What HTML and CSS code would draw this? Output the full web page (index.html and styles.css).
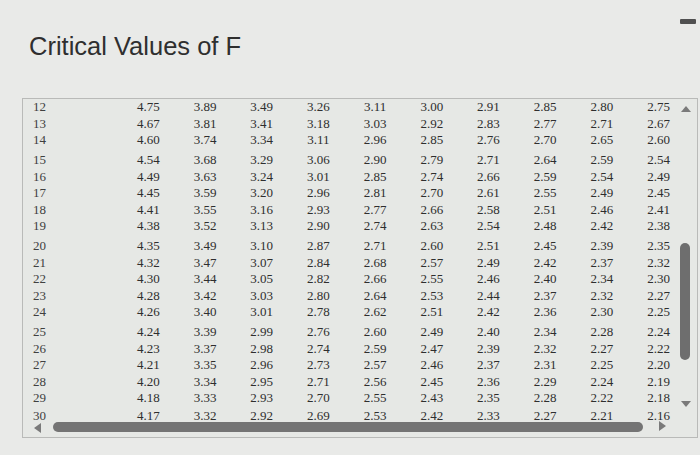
FILE: index.html
```html
<!DOCTYPE html>
<html>
<head>
<meta charset="utf-8">
<link rel="stylesheet" href="styles.css">
</head>
<body>
<div class="page">
  <header class="top">
    <h1 class="title">Critical Values of F</h1>
    <span class="minimize"></span>
  </header>
  <div class="box">
    <div class="table">
      <div class="group">
        <div class="row"><span class="lab">12</span><span>4.75</span><span>3.89</span><span>3.49</span><span>3.26</span><span>3.11</span><span>3.00</span><span>2.91</span><span>2.85</span><span>2.80</span><span>2.75</span></div>
        <div class="row"><span class="lab">13</span><span>4.67</span><span>3.81</span><span>3.41</span><span>3.18</span><span>3.03</span><span>2.92</span><span>2.83</span><span>2.77</span><span>2.71</span><span>2.67</span></div>
        <div class="row"><span class="lab">14</span><span>4.60</span><span>3.74</span><span>3.34</span><span>3.11</span><span>2.96</span><span>2.85</span><span>2.76</span><span>2.70</span><span>2.65</span><span>2.60</span></div>
      </div>
      <div class="group">
        <div class="row"><span class="lab">15</span><span>4.54</span><span>3.68</span><span>3.29</span><span>3.06</span><span>2.90</span><span>2.79</span><span>2.71</span><span>2.64</span><span>2.59</span><span>2.54</span></div>
        <div class="row"><span class="lab">16</span><span>4.49</span><span>3.63</span><span>3.24</span><span>3.01</span><span>2.85</span><span>2.74</span><span>2.66</span><span>2.59</span><span>2.54</span><span>2.49</span></div>
        <div class="row"><span class="lab">17</span><span>4.45</span><span>3.59</span><span>3.20</span><span>2.96</span><span>2.81</span><span>2.70</span><span>2.61</span><span>2.55</span><span>2.49</span><span>2.45</span></div>
        <div class="row"><span class="lab">18</span><span>4.41</span><span>3.55</span><span>3.16</span><span>2.93</span><span>2.77</span><span>2.66</span><span>2.58</span><span>2.51</span><span>2.46</span><span>2.41</span></div>
        <div class="row"><span class="lab">19</span><span>4.38</span><span>3.52</span><span>3.13</span><span>2.90</span><span>2.74</span><span>2.63</span><span>2.54</span><span>2.48</span><span>2.42</span><span>2.38</span></div>
      </div>
      <div class="group">
        <div class="row"><span class="lab">20</span><span>4.35</span><span>3.49</span><span>3.10</span><span>2.87</span><span>2.71</span><span>2.60</span><span>2.51</span><span>2.45</span><span>2.39</span><span>2.35</span></div>
        <div class="row"><span class="lab">21</span><span>4.32</span><span>3.47</span><span>3.07</span><span>2.84</span><span>2.68</span><span>2.57</span><span>2.49</span><span>2.42</span><span>2.37</span><span>2.32</span></div>
        <div class="row"><span class="lab">22</span><span>4.30</span><span>3.44</span><span>3.05</span><span>2.82</span><span>2.66</span><span>2.55</span><span>2.46</span><span>2.40</span><span>2.34</span><span>2.30</span></div>
        <div class="row"><span class="lab">23</span><span>4.28</span><span>3.42</span><span>3.03</span><span>2.80</span><span>2.64</span><span>2.53</span><span>2.44</span><span>2.37</span><span>2.32</span><span>2.27</span></div>
        <div class="row"><span class="lab">24</span><span>4.26</span><span>3.40</span><span>3.01</span><span>2.78</span><span>2.62</span><span>2.51</span><span>2.42</span><span>2.36</span><span>2.30</span><span>2.25</span></div>
      </div>
      <div class="group">
        <div class="row"><span class="lab">25</span><span>4.24</span><span>3.39</span><span>2.99</span><span>2.76</span><span>2.60</span><span>2.49</span><span>2.40</span><span>2.34</span><span>2.28</span><span>2.24</span></div>
        <div class="row"><span class="lab">26</span><span>4.23</span><span>3.37</span><span>2.98</span><span>2.74</span><span>2.59</span><span>2.47</span><span>2.39</span><span>2.32</span><span>2.27</span><span>2.22</span></div>
        <div class="row"><span class="lab">27</span><span>4.21</span><span>3.35</span><span>2.96</span><span>2.73</span><span>2.57</span><span>2.46</span><span>2.37</span><span>2.31</span><span>2.25</span><span>2.20</span></div>
        <div class="row"><span class="lab">28</span><span>4.20</span><span>3.34</span><span>2.95</span><span>2.71</span><span>2.56</span><span>2.45</span><span>2.36</span><span>2.29</span><span>2.24</span><span>2.19</span></div>
        <div class="row"><span class="lab">29</span><span>4.18</span><span>3.33</span><span>2.93</span><span>2.70</span><span>2.55</span><span>2.43</span><span>2.35</span><span>2.28</span><span>2.22</span><span>2.18</span></div>
      </div>
      <div class="group last">
        <div class="row"><span class="lab">30</span><span>4.17</span><span>3.32</span><span>2.92</span><span>2.69</span><span>2.53</span><span>2.42</span><span>2.33</span><span>2.27</span><span>2.21</span><span>2.16</span></div>
      </div>
    </div>
    <div class="vscroll">
      <span class="arrow up"></span>
      <span class="vthumb"></span>
      <span class="arrow down"></span>
    </div>
    <div class="hscroll">
      <span class="arrow left"></span>
      <span class="hthumb"></span>
      <span class="arrow right"></span>
    </div>
  </div>
</div>
</body>
</html>
```

FILE: styles.css
```css
html, body {
  margin: 0;
  padding: 0;
}
body {
  background: #e9eae8;
  width: 700px;
  height: 455px;
  overflow: hidden;
}
.page {
  position: relative;
  width: 700px;
  height: 455px;
}
.top {
  height: 98px;
  position: relative;
}
.title {
  margin: 0;
  padding: 31px 0 0 29px;
  font-family: "Liberation Sans", Arial, sans-serif;
  font-weight: normal;
  font-size: 25.5px;
  line-height: 30px;
  color: #2f2f2f;
}
.minimize {
  position: absolute;
  left: 680px;
  top: 19px;
  width: 16px;
  height: 5px;
  border-radius: 1px;
  background: #505050;
}
.box {
  position: relative;
  margin-left: 22px;
  width: 674px;
  height: 338px;
  border: 1px solid #b9bab8;
  background: #e6e8e5;
}
.table {
  font-family: "Liberation Serif", "Times New Roman", serif;
  font-size: 13px;
  color: #2e2e2e;
}
.group {
  margin-bottom: 3.6px;
}
.group.last {
  margin-top: -2px;
}
.row {
  display: grid;
  grid-template-columns: 97px repeat(10, 56.7px);
  height: 16.5px;
  line-height: 16.5px;
}
.row span {
  text-align: center;
}
.row .lab {
  text-align: left;
  padding-left: 10px;
  color: #404040;
}
.vscroll .arrow, .hscroll .arrow {
  position: absolute;
  width: 0;
  height: 0;
}
.up {
  left: 658px;
  top: 7px;
  border-left: 5px solid transparent;
  border-right: 5px solid transparent;
  border-bottom: 6px solid #7a7a7a;
}
.down {
  left: 658px;
  top: 302px;
  border-left: 5px solid transparent;
  border-right: 5px solid transparent;
  border-top: 6px solid #7a7a7a;
}
.left {
  left: 11px;
  top: 324px;
  border-top: 5px solid transparent;
  border-bottom: 5px solid transparent;
  border-right: 7px solid #7a7a7a;
}
.right {
  left: 636px;
  top: 322px;
  border-top: 5px solid transparent;
  border-bottom: 5px solid transparent;
  border-left: 7px solid #7a7a7a;
}
.vthumb {
  position: absolute;
  left: 657px;
  top: 144px;
  width: 10px;
  height: 117px;
  border-radius: 5px;
  background: #6e6e6e;
}
.hthumb {
  position: absolute;
  left: 30px;
  top: 323px;
  width: 590px;
  height: 10px;
  border-radius: 5px;
  background: #747474;
}
```
